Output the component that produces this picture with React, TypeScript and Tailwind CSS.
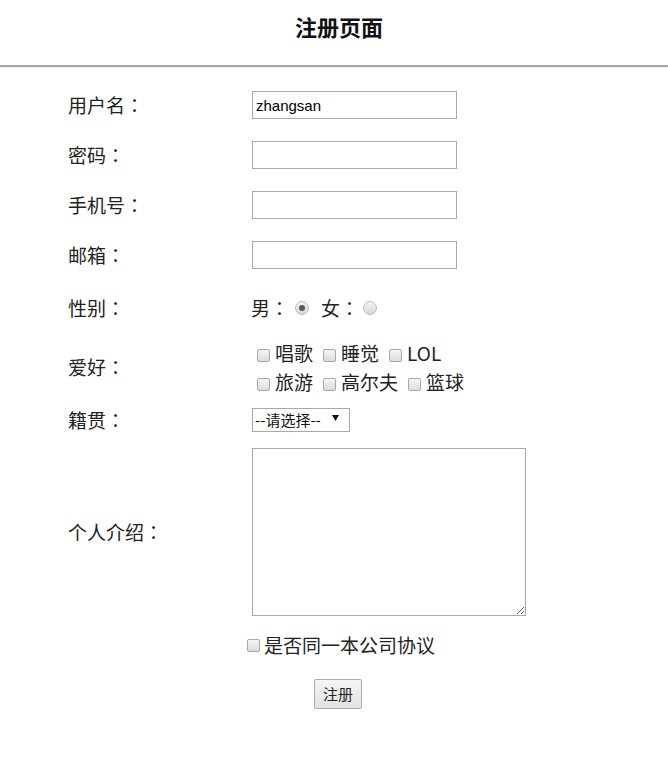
import React from "react";

const labelCls = "w-[184px] shrink-0 text-[19px] leading-[24px] text-[#222]";

// full-width colon centred in its cell, like the Windows font does
function Colon() {
    return <span className="font-['Noto_Sans_CJK_TC',sans-serif]">：</span>;
}

function Radio({ checked, cls }: { checked?: boolean; cls: string }) {
    return (
        <span className={`${cls} inline-flex h-[14px] w-[14px] items-center justify-center rounded-full border border-[#bdbdbd] bg-gradient-to-b from-[#f2f2f2] to-[#d8d8d8] align-middle`}>
            {checked && <span className="h-[6px] w-[6px] rounded-full bg-[#5a5a5a]" />}
        </span>
    );
}

function Box({ first }: { first?: boolean }) {
    return (
        <span className={`${first ? "ml-[5px]" : "ml-[10px]"} mr-[5px] inline-block h-[13px] w-[13px] rounded-[2px] border border-[#a8a8a8] bg-gradient-to-b from-[#f6f6f6] to-[#dcdcdc] align-[-1px]`} />
    );
}

function Row({ label, h, children }: { label?: string; h: string; children: React.ReactNode }) {
    return (
        <div className={`flex items-center ${h}`}>
            <div className={labelCls}>
                {label}
                <Colon />
            </div>
            {children}
        </div>
    );
}

function TextInput({ value }: { value?: string }) {
    return (
        <input
            readOnly
            value={value ?? ""}
            className="h-[28px] w-[205px] border border-[#a9a9a9] bg-white px-[3px] font-['Liberation_Sans',sans-serif] text-[15px] text-black outline-none"
        />
    );
}

export default function App() {
    return (
        <div className="min-h-[780px] w-full bg-white font-['Noto_Sans_CJK_SC',sans-serif] text-[#222]">
            <div className="h-[65px] pl-[10px] pt-[13px] text-center text-[22px] font-bold leading-[26px] text-[#111]">
                注册页面
            </div>
            <div className="h-[2px] bg-[#a8a8a8]" />
            <div className="h-[1px] bg-[#eeeeee]" />

            <div className="pl-[68px]">
                <div className="h-[12px]" />
                <Row label="用户名" h="h-[50px]">
                    <TextInput value="zhangsan" />
                </Row>
                <Row label="密码" h="h-[50px]">
                    <TextInput />
                </Row>
                <Row label="手机号" h="h-[50px]">
                    <TextInput />
                </Row>
                <Row label="邮箱" h="h-[50px]">
                    <TextInput />
                </Row>
                <Row label="性别" h="h-[56px]">
                    <div className="-ml-[1px] flex items-center text-[19px] leading-[24px]">
                        <span>男</span>
                        <Colon />
                        <Radio checked cls="ml-[6px]" />
                        <span className="ml-[12px]">女</span>
                        <Colon />
                        <Radio cls="ml-[4px]" />
                    </div>
                </Row>
                <Row label="爱好" h="h-[62px]">
                    <div className="text-[19px] leading-[29px]">
                        <div>
                            <Box first />唱歌<Box />睡觉<Box />LOL
                        </div>
                        <div>
                            <Box first />旅游<Box />高尔夫<Box />篮球
                        </div>
                    </div>
                </Row>
                <Row label="籍贯" h="h-[44px]">
                    <div className="flex h-[24px] w-[98px] items-center justify-between border border-[#a9a9a9] bg-white px-[2px] text-[15px] leading-[20px] text-[#111]">
                        <span>--请选择--</span>
                        <svg width="7" height="6" viewBox="0 0 7 6" className="mr-[8px] -mt-[5px]">
                            <path d="M0 0h7L3.5 6z" fill="#111" />
                        </svg>
                    </div>
                </Row>
                <Row label="个人介绍" h="h-[180px]">
                    <textarea readOnly className="h-[168px] w-[274px] border border-[#a9a9a9] bg-white" />
                </Row>
                <div className="flex h-[46px] items-center pl-[174px] text-[19px] leading-[24px]">
                    <Box first />
                    <span className="-ml-[1px]">是否同一本公司协议</span>
                </div>
                <div className="flex h-[52px] items-center pl-[246px]">
                    <button className="h-[30px] w-[48px] rounded-[2px] border border-[#adadad] bg-gradient-to-b from-[#f5f5f5] to-[#e2e2e2] text-[15px] leading-[20px] text-[#222]">
                        注册
                    </button>
                </div>
            </div>
        </div>
    );
}
